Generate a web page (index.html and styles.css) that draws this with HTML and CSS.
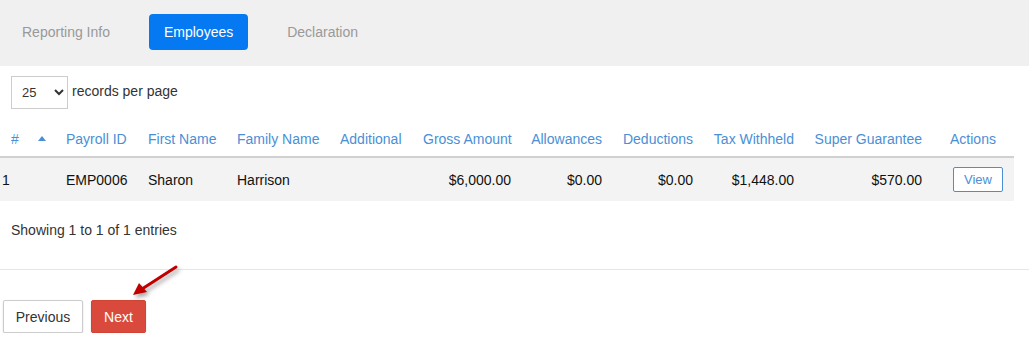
FILE: index.html
```html
<!DOCTYPE html>
<html>
<head>
  <title>Employees</title>
  <link rel="stylesheet" href="styles.css">
</head>
<body>

<div class="tabbar">
  <span class="tab">Reporting Info</span>
  <span class="tab active">Employees</span>
  <span class="tab">Declaration</span>
</div>

<div class="length">
  <select class="per-page">
    <option>25</option>
    <option>50</option>
    <option>100</option>
  </select>
  <span class="length-label">records per page</span>
</div>

<table class="grid">
  <colgroup>
    <col style="width:30px"><col style="width:26px"><col style="width:82px"><col style="width:89px">
    <col style="width:103px"><col style="width:83px"><col style="width:108px"><col style="width:91px">
    <col style="width:91px"><col style="width:101px"><col style="width:128px"><col style="width:82px">
  </colgroup>
  <tr>
    <th class="num">#</th>
    <th class="sort"><span class="sort-up"></span></th>
    <th>Payroll ID</th>
    <th>First Name</th>
    <th>Family Name</th>
    <th>Additional</th>
    <th class="money">Gross Amount</th>
    <th class="money">Allowances</th>
    <th class="money">Deductions</th>
    <th class="money">Tax Withheld</th>
    <th class="money">Super Guarantee</th>
    <th class="center">Actions</th>
  </tr>
  <tr>
    <td class="idx">1</td>
    <td></td>
    <td>EMP0006</td>
    <td>Sharon</td>
    <td>Harrison</td>
    <td></td>
    <td class="money">$6,000.00</td>
    <td class="money">$0.00</td>
    <td class="money">$0.00</td>
    <td class="money">$1,448.00</td>
    <td class="money">$570.00</td>
    <td class="center"><button class="view">View</button></td>
  </tr>
</table>

<div class="info">Showing 1 to 1 of 1 entries</div>

<div class="footer">
  <button class="btn prev">Previous</button>
  <button class="btn next">Next</button>
  <svg class="pointer" width="60" height="45" viewBox="0 0 60 45">
    <defs>
      <filter id="sh" x="-30%" y="-30%" width="160%" height="160%">
        <feDropShadow dx="2" dy="3" stdDeviation="2" flood-color="#000" flood-opacity="0.35"/>
      </filter>
    </defs>
    <g filter="url(#sh)">
      <line x1="50" y1="3" x2="16" y2="25" stroke="#c00000" stroke-width="3" stroke-linecap="round"/>
      <polygon points="7,31 13,19 21,28" fill="#c00000"/>
    </g>
  </svg>
</div>

</body>
</html>
```

FILE: styles.css
```css
body {
  margin: 0;
  font-family: "Liberation Sans", Arial, sans-serif;
  font-size: 14px;
  color: #222;
  background: #fff;
}

/* top tabs */
.tabbar {
  display: flex;
  gap: 24px;
  padding: 14px 7px 16px;
  background-color: #f0f0f0;
}

.tab {
  height: 36px;
  line-height: 36px;
  padding: 0 15px;
  color: #999;
  border-radius: 4px;
}

.tab.active {
  background-color: #0479f2;
  color: #fff;
}

/* records per page */
.length {
  display: flex;
  align-items: center;
  gap: 4px;
  margin: 10px 0 0 11px;
  color: #333;
}

.length-label {
  margin-bottom: 3px;
}

.per-page {
  width: 57px;
  height: 33px;
  padding: 0 6px;
  border: 1px solid #ccc;
  border-radius: 0;
  background: #fff;
  font-family: "Liberation Sans", Arial, sans-serif;
  font-size: 13px;
  color: #333;
}

/* table */
table.grid {
  width: 1014px;
  margin-top: 13px;
  border-collapse: collapse;
  table-layout: fixed;
}

.grid th {
  height: 34px;
  padding: 0 10px;
  text-align: left;
  font-weight: normal;
  color: #4a8fd6;
  border-bottom: 2px solid #d0d0d0;
  white-space: nowrap;
}

.grid td {
  height: 43px;
  padding: 0 10px;
  background-color: #f3f3f3;
  color: #111;
  white-space: nowrap;
}

.grid th.num {
  padding-left: 11px;
}

.grid th.sort {
  padding: 0 0 0 8px;
}

.grid td.idx {
  padding-left: 2px;
}

.grid .money {
  text-align: right;
}

.grid .center {
  text-align: center;
  padding: 0;
}

.sort-up {
  display: inline-block;
  margin-bottom: 3px;
  border-left: 4px solid transparent;
  border-right: 4px solid transparent;
  border-bottom: 5px solid #4a8fd6;
  vertical-align: middle;
}

button.view {
  height: 25px;
  padding: 0 10px;
  margin-left: 10px;
  border: 1px solid #4a8fd6;
  border-radius: 2px;
  background: #fff;
  color: #4a8fd6;
  font-family: "Liberation Sans", Arial, sans-serif;
  font-size: 13px;
}

.info {
  margin: 19px 0 0 11px;
  line-height: 20px;
  color: #333;
}

/* pager */
.footer {
  position: relative;
  display: flex;
  gap: 8px;
  margin-top: 29px;
  padding: 30px 0 0 3px;
  border-top: 1px solid #e6e6e6;
}

.btn {
  height: 33px;
  border-radius: 2px;
  font-family: "Liberation Sans", Arial, sans-serif;
  font-size: 14px;
  box-shadow: 0 1px 2px rgba(0, 0, 0, 0.15);
}

.btn.prev {
  width: 80px;
  border: 1px solid #ccc;
  background: #fff;
  color: #333;
}

.btn.next {
  width: 55px;
  border: 1px solid #d14536;
  background: #da4a3c;
  color: #fff;
}

.pointer {
  position: absolute;
  left: 126px;
  top: -6px;
}
```
